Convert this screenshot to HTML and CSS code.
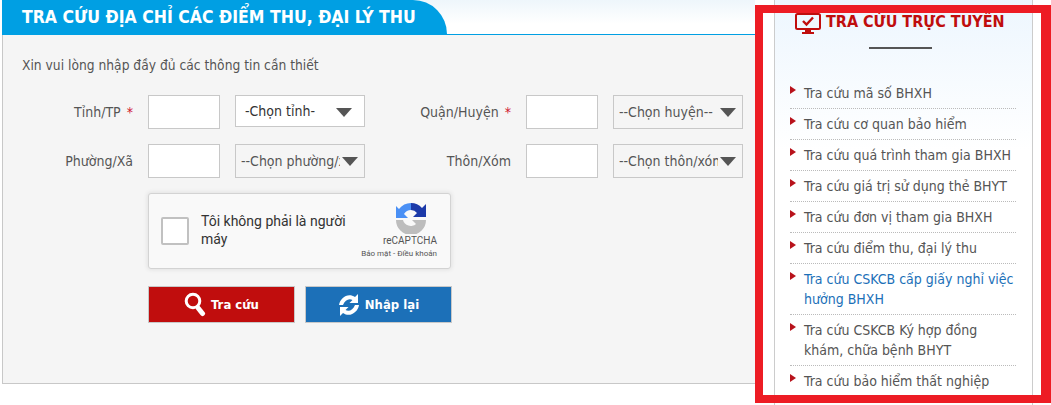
FILE: index.html
```html
<!DOCTYPE html>
<html lang="vi">
<head>
    <meta charset="UTF-8">
    <title>Tra cứu điểm thu, đại lý thu</title>
    <link rel="stylesheet" href="styles.css">
</head>
<body>
    <div class="page">
        <main class="lookup">
            <div class="tab-bar">
                <h1 class="tab">TRA CỨU ĐỊA CHỈ CÁC ĐIỂM THU, ĐẠI LÝ THU</h1>
            </div>
            <form class="panel">
                <p class="hint">Xin vui lòng nhập đầy đủ các thông tin cần thiết</p>

                <div class="fields">
                    <label class="field-label">Tỉnh/TP <span class="req">*</span></label>
                    <input class="code" type="text">
                    <div class="pick pick-white">
                        <select><option>-Chọn tỉnh-</option></select>
                        <span class="arrow"></span>
                    </div>
                    <label class="field-label">Quận/Huyện <span class="req">*</span></label>
                    <input class="code" type="text">
                    <div class="pick">
                        <select><option>--Chọn huyện--</option></select>
                        <span class="arrow"></span>
                    </div>

                    <label class="field-label">Phường/Xã</label>
                    <input class="code" type="text">
                    <div class="pick">
                        <select><option>--Chọn phường/xã--</option></select>
                        <span class="arrow"></span>
                    </div>
                    <label class="field-label">Thôn/Xóm</label>
                    <input class="code" type="text">
                    <div class="pick">
                        <select><option>--Chọn thôn/xóm--</option></select>
                        <span class="arrow"></span>
                    </div>
                </div>

                <div class="captcha">
                    <span class="check"></span>
                    <span class="captcha-text">Tôi không phải là người máy</span>
                    <div class="captcha-brand">
                        <svg width="32" height="32" viewBox="0 0 32 32">
                            <path fill="#1c3aa9" d="M16 1a15 15 0 0 1 11 5l4-4v13H18l4-4a8 8 0 0 0-6-3z"/>
                            <path fill="#4a90f5" d="M16 1A15 15 0 0 0 4 7L1 4v12h12L9 12a9 9 0 0 1 7-4z"/>
                            <path fill="#bdbdbd" d="M1 17h7a8 8 0 0 0 13 4l-4-4h14a15 15 0 0 1-30 0z" transform="translate(0 1)"/>
                        </svg>
                        <span class="brand-name">reCAPTCHA</span>
                        <span class="brand-links">Bảo mật - Điều khoản</span>
                    </div>
                </div>

                <div class="actions">
                    <button class="btn btn-red" type="button">
                        <svg width="22" height="26" viewBox="0 0 22 26">
                            <circle cx="9" cy="9" r="6.800" fill="none" stroke="#fff" stroke-width="3"/>
                            <path d="M14.500 16.500l4 5" stroke="#fff" stroke-width="5" stroke-linecap="round"/>
                        </svg>
                        Tra cứu
                    </button>
                    <button class="btn btn-blue" type="button">
                        <svg width="22" height="24" viewBox="0 0 22 24">
                            <path fill="#fff" d="M20 1v9h-8.500l3-3C11 5 7 7 5 12H1C2 5 10-1 17 4z"/>
                            <path fill="#fff" d="M2 23v-9h8.500l-3 3c3.500 2 7.500 0 9.500-5h4c-1 7-9 13-16 8z"/>
                        </svg>
                        Nhập lại
                    </button>
                </div>
            </form>
        </main>

        <aside class="side">
            <h2 class="side-title">
                <svg width="26" height="21" viewBox="0 0 26 21">
                    <rect x="1" y="1" width="24" height="15" rx="1.500" fill="none" stroke="#c00d0d" stroke-width="2"/>
                    <path d="M8 8l3.500 3.500L18 4.500" fill="none" stroke="#c00d0d" stroke-width="2.400"/>
                    <path fill="#c00d0d" d="M10 17h6v2h3v2H7v-2h3z"/>
                </svg>
                <span class="side-title-text">TRA CỨU TRỰC TUYẾN</span>
            </h2>
            <div class="side-rule"></div>
            <ul class="side-list">
                <li>Tra cứu mã số BHXH</li>
                <li>Tra cứu cơ quan bảo hiểm</li>
                <li>Tra cứu quá trình tham gia BHXH</li>
                <li>Tra cứu giá trị sử dụng thẻ BHYT</li>
                <li>Tra cứu đơn vị tham gia BHXH</li>
                <li>Tra cứu điểm thu, đại lý thu</li>
                <li class="active">Tra cứu CSKCB cấp giấy nghỉ việc hưởng BHXH</li>
                <li>Tra cứu CSKCB Ký hợp đồng khám, chữa bệnh BHYT</li>
                <li>Tra cứu bảo hiểm thất nghiệp</li>
            </ul>
        </aside>
    </div>
    <div class="highlight"></div>
</body>
</html>
```
FILE: styles.css
```css
html, body {
    margin: 0;
    padding: 0;
    height: 405px;
    overflow: hidden;
    background-color: #fff;
}

body {
    font-family: "DejaVu Sans Condensed", "DejaVu Sans", sans-serif;
    font-stretch: condensed;
    font-size: 14px;
    color: #555;
}

.page {
    display: flex;
    align-items: flex-start;
    padding-left: 2px;
}

/* left block */
.lookup {
    width: 753px;
    flex: none;
}

.tab-bar {
    height: 34px;
    border-bottom: 1px solid #009fe3;
    background: linear-gradient(#eef6fb, #fff 24px);
}

.tab {
    margin: 0;
    width: 445px;
    height: 35px;
    box-sizing: border-box;
    padding: 6px 0 0 20px;
    background-color: #009fe3;
    border-top-right-radius: 34px;
    color: #fff;
    font-size: 17.500px;
    line-height: 22px;
    font-weight: bold;
    white-space: nowrap;
}

.panel {
    height: 349px;
    box-sizing: border-box;
    background-color: #f5f5f5;
    border-left: 1px solid #c8c8c8;
    border-bottom: 1px solid #c8c8c8;
    padding: 20px 0 0 19px;
}

.hint {
    margin: 0 0 20px;
    font-size: 13.700px;
    line-height: 20px;
}

.fields {
    display: grid;
    grid-template-columns: 119px 72px 130px 131px 72px 130px;
    grid-auto-rows: 34px;
    column-gap: 15px;
    row-gap: 15px;
    margin-left: -8px;
}

.field-label {
    text-align: right;
    line-height: 34px;
    white-space: nowrap;
}

.req {
    color: #d0112b;
    margin-left: 2px;
}

.code {
    box-sizing: border-box;
    width: 72px;
    height: 34px;
    border: 1px solid #c8c8c8;
    background-color: #fff;
    padding: 0;
    margin: 0;
}

.pick {
    position: relative;
    height: 34px;
}

.pick select {
    appearance: none;
    box-sizing: border-box;
    width: 100%;
    height: 100%;
    margin: 0;
    padding: 0 24px 0 5px;
    border: 1px solid #c8c8c8;
    border-radius: 0;
    background-color: #f5f5f5;
    font-family: inherit;
    font-stretch: inherit;
    font-size: 14px;
    color: #555;
}

.pick-white {
    height: 32px;
}

.pick-white select {
    background-color: #fff;
    color: #333;
    padding-left: 9px;
}

.arrow {
    position: absolute;
    top: 13px;
    right: 7px;
    width: 0;
    height: 0;
    border-left: 8px solid transparent;
    border-right: 8px solid transparent;
    border-top: 9px solid #555;
}

.pick-white .arrow {
    right: 13px;
}

.captcha {
    display: flex;
    align-items: center;
    box-sizing: border-box;
    width: 303px;
    height: 76px;
    margin: 15px 0 0 126px;
    padding: 0 13px 0 12px;
    background-color: #f9f9f9;
    border: 1px solid #d3d3d3;
    border-radius: 3px;
    box-shadow: 0 0 4px 1px rgba(0, 0, 0, 0.08);
    font-family: Roboto, "Liberation Sans", sans-serif;
    font-stretch: normal;
}

.check {
    flex: none;
    box-sizing: border-box;
    width: 28px;
    height: 28px;
    background-color: #fff;
    border: 2px solid #c1c1c1;
    border-radius: 2px;
}

.captcha-text {
    width: 155px;
    margin: -3px 0 0 12px;
    font-size: 14px;
    line-height: 18px;
    color: #333;
}

.captcha-brand {
    margin-left: auto;
    display: flex;
    flex-direction: column;
    align-items: flex-end;
    color: #555;
}

.captcha-brand svg {
    margin-right: 10px;
}

.brand-name {
    font-size: 10px;
    line-height: 14px;
}

.brand-links {
    font-size: 8px;
    line-height: 12px;
}

.actions {
    display: flex;
    gap: 10px;
    margin: 17px 0 0 126px;
}

.btn {
    display: flex;
    align-items: center;
    justify-content: center;
    gap: 5px;
    box-sizing: border-box;
    width: 147px;
    height: 37px;
    padding: 0;
    border: 1px solid #c8c8c8;
    color: #fff;
    font-family: inherit;
    font-stretch: inherit;
    font-size: 13px;
    font-weight: bold;
}

.btn-red {
    background-color: #c00d0d;
}

.btn-blue {
    background-color: #1c70b8;
}

/* right block */
.side {
    width: 259px;
    height: 405px;
    flex: none;
    box-sizing: border-box;
    margin-left: 19px;
    border-left: 1px solid #ccc;
    border-right: 1px solid #ccc;
    background: linear-gradient(#edf6fe, #fff 150px);
    padding-top: 12px;
}

.side-title {
    display: flex;
    align-items: center;
    gap: 5px;
    margin: 0;
    padding-left: 20px;
    height: 22px;
    color: #c00d0d;
    font-size: 16px;
    font-weight: bold;
    white-space: nowrap;
}

.side-title-text {
    margin-top: -3px;
}

.side-rule {
    width: 63px;
    height: 2px;
    margin: 13px 0 0 94px;
    background-color: #555;
}

.side-list {
    list-style: none;
    margin: 29px 0 0;
    padding: 0 16px 0 15px;
}

.side-list li {
    position: relative;
    padding: 5px 0 5px 14px;
    line-height: 20px;
    border-bottom: 1px dotted #bbb;
}

.side-list li::before {
    content: "";
    position: absolute;
    left: 0;
    top: 8px;
    border-top: 4.500px solid transparent;
    border-bottom: 4.500px solid transparent;
    border-left: 6px solid #b8121b;
}

.side-list li:last-child {
    border-bottom: none;
}

.side-list .active {
    color: #1c70b8;
}

/* red marker drawn over the screenshot */
.highlight {
    position: absolute;
    left: 755px;
    top: 5px;
    width: 296px;
    height: 398px;
    box-sizing: border-box;
    border: solid #ed1c24;
    border-width: 8px 10px 8px 8px;
}
```
